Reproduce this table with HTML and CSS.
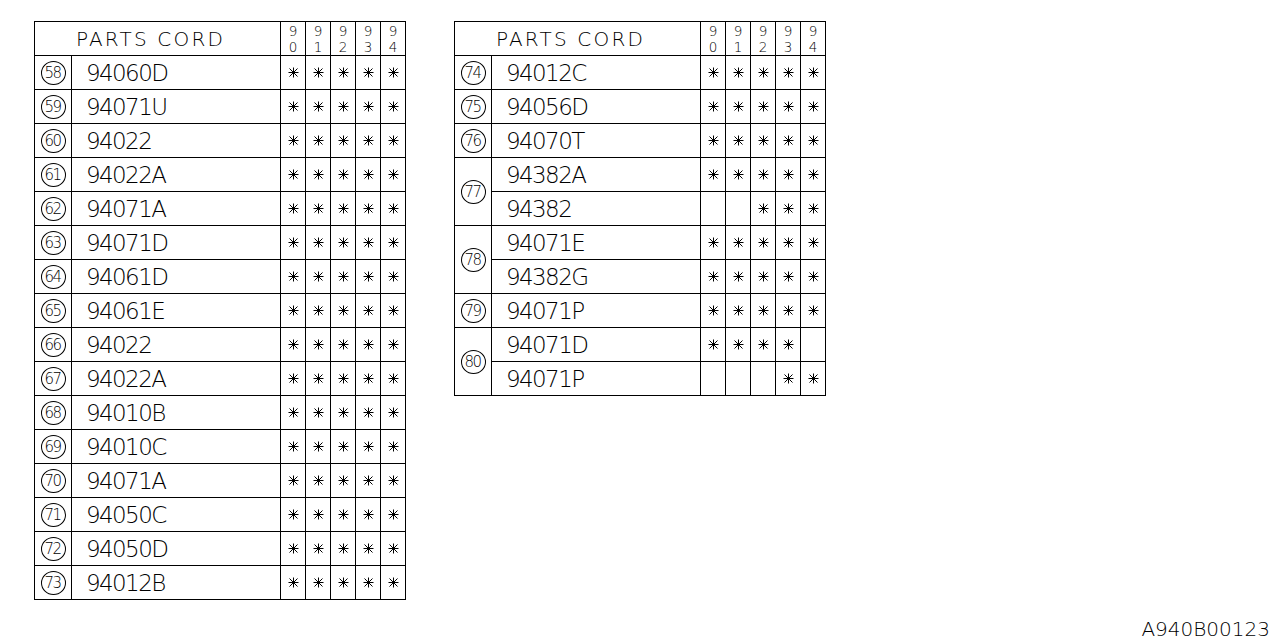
FILE: index.html
```html
<!DOCTYPE html>
<html>
<head>
<meta charset="utf-8">
<link rel="stylesheet" href="styles.css">
</head>
<body>
<svg class="defs" width="0" height="0" aria-hidden="true">
  <defs>
    <g id="ast" stroke="#000" stroke-width="1" fill="none">
      <line x1="5.5" y1="0.5" x2="5.5" y2="10.5"/>
      <line x1="0.5" y1="5.5" x2="10.5" y2="5.5"/>
      <line x1="1.5" y1="1.5" x2="9.5" y2="9.5"/>
      <line x1="9.5" y1="1.5" x2="1.5" y2="9.5"/>
    </g>
  </defs>
</svg>
<div class="page">
  <div class="tables">
    <div class="tbl">
      <div class="hd">PARTS CORD</div>
      <div class="yr"><span>9</span><span>0</span></div><div class="yr"><span>9</span><span>1</span></div><div class="yr"><span>9</span><span>2</span></div><div class="yr"><span>9</span><span>3</span></div><div class="yr"><span>9</span><span>4</span></div>

      <div class="no"><span class="circ">58</span></div><div class="code">94060D</div><div class="m"><svg class="a"><use href="#ast"/></svg></div><div class="m"><svg class="a"><use href="#ast"/></svg></div><div class="m"><svg class="a"><use href="#ast"/></svg></div><div class="m"><svg class="a"><use href="#ast"/></svg></div><div class="m"><svg class="a"><use href="#ast"/></svg></div>
      <div class="no"><span class="circ">59</span></div><div class="code">94071U</div><div class="m"><svg class="a"><use href="#ast"/></svg></div><div class="m"><svg class="a"><use href="#ast"/></svg></div><div class="m"><svg class="a"><use href="#ast"/></svg></div><div class="m"><svg class="a"><use href="#ast"/></svg></div><div class="m"><svg class="a"><use href="#ast"/></svg></div>
      <div class="no"><span class="circ">60</span></div><div class="code">94022</div><div class="m"><svg class="a"><use href="#ast"/></svg></div><div class="m"><svg class="a"><use href="#ast"/></svg></div><div class="m"><svg class="a"><use href="#ast"/></svg></div><div class="m"><svg class="a"><use href="#ast"/></svg></div><div class="m"><svg class="a"><use href="#ast"/></svg></div>
      <div class="no"><span class="circ">61</span></div><div class="code">94022A</div><div class="m"><svg class="a"><use href="#ast"/></svg></div><div class="m"><svg class="a"><use href="#ast"/></svg></div><div class="m"><svg class="a"><use href="#ast"/></svg></div><div class="m"><svg class="a"><use href="#ast"/></svg></div><div class="m"><svg class="a"><use href="#ast"/></svg></div>
      <div class="no"><span class="circ">62</span></div><div class="code">94071A</div><div class="m"><svg class="a"><use href="#ast"/></svg></div><div class="m"><svg class="a"><use href="#ast"/></svg></div><div class="m"><svg class="a"><use href="#ast"/></svg></div><div class="m"><svg class="a"><use href="#ast"/></svg></div><div class="m"><svg class="a"><use href="#ast"/></svg></div>
      <div class="no"><span class="circ">63</span></div><div class="code">94071D</div><div class="m"><svg class="a"><use href="#ast"/></svg></div><div class="m"><svg class="a"><use href="#ast"/></svg></div><div class="m"><svg class="a"><use href="#ast"/></svg></div><div class="m"><svg class="a"><use href="#ast"/></svg></div><div class="m"><svg class="a"><use href="#ast"/></svg></div>
      <div class="no"><span class="circ">64</span></div><div class="code">94061D</div><div class="m"><svg class="a"><use href="#ast"/></svg></div><div class="m"><svg class="a"><use href="#ast"/></svg></div><div class="m"><svg class="a"><use href="#ast"/></svg></div><div class="m"><svg class="a"><use href="#ast"/></svg></div><div class="m"><svg class="a"><use href="#ast"/></svg></div>
      <div class="no"><span class="circ">65</span></div><div class="code">94061E</div><div class="m"><svg class="a"><use href="#ast"/></svg></div><div class="m"><svg class="a"><use href="#ast"/></svg></div><div class="m"><svg class="a"><use href="#ast"/></svg></div><div class="m"><svg class="a"><use href="#ast"/></svg></div><div class="m"><svg class="a"><use href="#ast"/></svg></div>
      <div class="no"><span class="circ">66</span></div><div class="code">94022</div><div class="m"><svg class="a"><use href="#ast"/></svg></div><div class="m"><svg class="a"><use href="#ast"/></svg></div><div class="m"><svg class="a"><use href="#ast"/></svg></div><div class="m"><svg class="a"><use href="#ast"/></svg></div><div class="m"><svg class="a"><use href="#ast"/></svg></div>
      <div class="no"><span class="circ">67</span></div><div class="code">94022A</div><div class="m"><svg class="a"><use href="#ast"/></svg></div><div class="m"><svg class="a"><use href="#ast"/></svg></div><div class="m"><svg class="a"><use href="#ast"/></svg></div><div class="m"><svg class="a"><use href="#ast"/></svg></div><div class="m"><svg class="a"><use href="#ast"/></svg></div>
      <div class="no"><span class="circ">68</span></div><div class="code">94010B</div><div class="m"><svg class="a"><use href="#ast"/></svg></div><div class="m"><svg class="a"><use href="#ast"/></svg></div><div class="m"><svg class="a"><use href="#ast"/></svg></div><div class="m"><svg class="a"><use href="#ast"/></svg></div><div class="m"><svg class="a"><use href="#ast"/></svg></div>
      <div class="no"><span class="circ">69</span></div><div class="code">94010C</div><div class="m"><svg class="a"><use href="#ast"/></svg></div><div class="m"><svg class="a"><use href="#ast"/></svg></div><div class="m"><svg class="a"><use href="#ast"/></svg></div><div class="m"><svg class="a"><use href="#ast"/></svg></div><div class="m"><svg class="a"><use href="#ast"/></svg></div>
      <div class="no"><span class="circ">70</span></div><div class="code">94071A</div><div class="m"><svg class="a"><use href="#ast"/></svg></div><div class="m"><svg class="a"><use href="#ast"/></svg></div><div class="m"><svg class="a"><use href="#ast"/></svg></div><div class="m"><svg class="a"><use href="#ast"/></svg></div><div class="m"><svg class="a"><use href="#ast"/></svg></div>
      <div class="no"><span class="circ">71</span></div><div class="code">94050C</div><div class="m"><svg class="a"><use href="#ast"/></svg></div><div class="m"><svg class="a"><use href="#ast"/></svg></div><div class="m"><svg class="a"><use href="#ast"/></svg></div><div class="m"><svg class="a"><use href="#ast"/></svg></div><div class="m"><svg class="a"><use href="#ast"/></svg></div>
      <div class="no"><span class="circ">72</span></div><div class="code">94050D</div><div class="m"><svg class="a"><use href="#ast"/></svg></div><div class="m"><svg class="a"><use href="#ast"/></svg></div><div class="m"><svg class="a"><use href="#ast"/></svg></div><div class="m"><svg class="a"><use href="#ast"/></svg></div><div class="m"><svg class="a"><use href="#ast"/></svg></div>
      <div class="no"><span class="circ">73</span></div><div class="code">94012B</div><div class="m"><svg class="a"><use href="#ast"/></svg></div><div class="m"><svg class="a"><use href="#ast"/></svg></div><div class="m"><svg class="a"><use href="#ast"/></svg></div><div class="m"><svg class="a"><use href="#ast"/></svg></div><div class="m"><svg class="a"><use href="#ast"/></svg></div>
    </div>

    <div class="tbl">
      <div class="hd">PARTS CORD</div>
      <div class="yr"><span>9</span><span>0</span></div><div class="yr"><span>9</span><span>1</span></div><div class="yr"><span>9</span><span>2</span></div><div class="yr"><span>9</span><span>3</span></div><div class="yr"><span>9</span><span>4</span></div>

      <div class="no"><span class="circ">74</span></div><div class="code">94012C</div><div class="m"><svg class="a"><use href="#ast"/></svg></div><div class="m"><svg class="a"><use href="#ast"/></svg></div><div class="m"><svg class="a"><use href="#ast"/></svg></div><div class="m"><svg class="a"><use href="#ast"/></svg></div><div class="m"><svg class="a"><use href="#ast"/></svg></div>
      <div class="no"><span class="circ">75</span></div><div class="code">94056D</div><div class="m"><svg class="a"><use href="#ast"/></svg></div><div class="m"><svg class="a"><use href="#ast"/></svg></div><div class="m"><svg class="a"><use href="#ast"/></svg></div><div class="m"><svg class="a"><use href="#ast"/></svg></div><div class="m"><svg class="a"><use href="#ast"/></svg></div>
      <div class="no"><span class="circ">76</span></div><div class="code">94070T</div><div class="m"><svg class="a"><use href="#ast"/></svg></div><div class="m"><svg class="a"><use href="#ast"/></svg></div><div class="m"><svg class="a"><use href="#ast"/></svg></div><div class="m"><svg class="a"><use href="#ast"/></svg></div><div class="m"><svg class="a"><use href="#ast"/></svg></div>
      <div class="no span2"><span class="circ">77</span></div><div class="code">94382A</div><div class="m"><svg class="a"><use href="#ast"/></svg></div><div class="m"><svg class="a"><use href="#ast"/></svg></div><div class="m"><svg class="a"><use href="#ast"/></svg></div><div class="m"><svg class="a"><use href="#ast"/></svg></div><div class="m"><svg class="a"><use href="#ast"/></svg></div>
      <div class="code">94382</div><div class="m"></div><div class="m"></div><div class="m"><svg class="a"><use href="#ast"/></svg></div><div class="m"><svg class="a"><use href="#ast"/></svg></div><div class="m"><svg class="a"><use href="#ast"/></svg></div>
      <div class="no span2"><span class="circ">78</span></div><div class="code">94071E</div><div class="m"><svg class="a"><use href="#ast"/></svg></div><div class="m"><svg class="a"><use href="#ast"/></svg></div><div class="m"><svg class="a"><use href="#ast"/></svg></div><div class="m"><svg class="a"><use href="#ast"/></svg></div><div class="m"><svg class="a"><use href="#ast"/></svg></div>
      <div class="code">94382G</div><div class="m"><svg class="a"><use href="#ast"/></svg></div><div class="m"><svg class="a"><use href="#ast"/></svg></div><div class="m"><svg class="a"><use href="#ast"/></svg></div><div class="m"><svg class="a"><use href="#ast"/></svg></div><div class="m"><svg class="a"><use href="#ast"/></svg></div>
      <div class="no"><span class="circ">79</span></div><div class="code">94071P</div><div class="m"><svg class="a"><use href="#ast"/></svg></div><div class="m"><svg class="a"><use href="#ast"/></svg></div><div class="m"><svg class="a"><use href="#ast"/></svg></div><div class="m"><svg class="a"><use href="#ast"/></svg></div><div class="m"><svg class="a"><use href="#ast"/></svg></div>
      <div class="no span2"><span class="circ">80</span></div><div class="code">94071D</div><div class="m"><svg class="a"><use href="#ast"/></svg></div><div class="m"><svg class="a"><use href="#ast"/></svg></div><div class="m"><svg class="a"><use href="#ast"/></svg></div><div class="m"><svg class="a"><use href="#ast"/></svg></div><div class="m"></div>
      <div class="code">94071P</div><div class="m"></div><div class="m"></div><div class="m"></div><div class="m"><svg class="a"><use href="#ast"/></svg></div><div class="m"><svg class="a"><use href="#ast"/></svg></div>
    </div>
  </div>
  <div class="footer">A940B00123</div>
</div>
</body>
</html>
```

FILE: styles.css
```css
html, body {
  margin: 0;
  padding: 0;
  background: #fff;
}
body {
  font-family: "DejaVu Sans", "Liberation Sans", sans-serif;
  font-weight: 200;
  color: #000;
  -webkit-font-smoothing: antialiased;
}
.defs {
  position: absolute;
  width: 0;
  height: 0;
}
.page {
  width: 1280px;
  height: 640px;
  box-sizing: border-box;
  padding: 21px 10px 0 34px;
  display: flex;
  flex-direction: column;
}
.tables {
  display: flex;
  align-items: flex-start;
  gap: 48px;
}
.tbl {
  display: grid;
  grid-template-columns: 36px 208px 24px 24px 24px 24px 24px;
  grid-auto-rows: 33px;
  gap: 1px;
  padding: 1px;
  background: #000;
}
.tbl > div {
  background: #fff;
}
.hd {
  grid-column: span 2;
  font-size: 20px;
  letter-spacing: 2.2px;
  line-height: 35px;
  padding-left: 41px;
}
.yr {
  display: flex;
  flex-direction: column;
  align-items: center;
  justify-content: center;
  font-size: 13.5px;
  line-height: 16px;
  overflow: hidden;
}
.no {
  display: flex;
  align-items: center;
  justify-content: center;
}
.span2 {
  grid-row: span 2;
}
.circ {
  width: 23px;
  height: 22px;
  border: 1px solid #000;
  border-radius: 50%;
  font-size: 15px;
  letter-spacing: -1.5px;
  text-indent: -1px;
  line-height: 22px;
  text-align: center;
  box-sizing: content-box;
  margin-top: 1px;
}
.code {
  font-size: 23px;
  letter-spacing: -1.6px;
  line-height: 34px;
  padding-left: 14px;
}
.m {
  display: flex;
  align-items: center;
  justify-content: center;
}
.a {
  width: 11px;
  height: 11px;
  display: block;
}
.footer {
  margin-top: auto;
  text-align: right;
  font-size: 20px;
  line-height: 20px;
  padding-bottom: 1px;
}
```
